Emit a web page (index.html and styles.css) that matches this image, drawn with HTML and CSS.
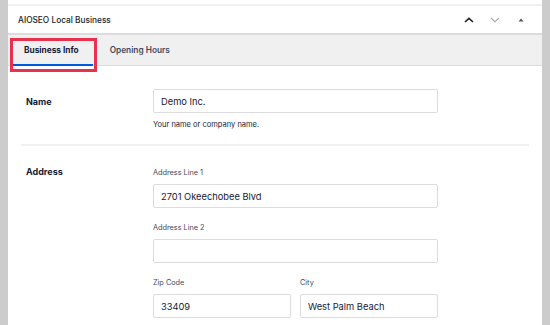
FILE: index.html
```html
<!DOCTYPE html>
<html lang="en">

<head>
    <meta charset="UTF-8">
    <meta name="viewport" content="width=device-width, initial-scale=1.0">
    <title>AIOSEO Local Business</title>
    <link rel="stylesheet" href="styles.css">
</head>

<body>
    <div class="panel">
        <div class="panel-header">
            <h2>AIOSEO Local Business</h2>
            <div class="panel-actions">
                <button class="action up" aria-label="Move up">
                    <svg width="10" height="6" viewBox="0 0 10 6"><path d="M1 5 L5 1.3 L9 5" fill="none" stroke="#1d2327" stroke-width="1.6"/></svg>
                </button>
                <button class="action down" aria-label="Move down">
                    <svg width="10" height="6" viewBox="0 0 10 6"><path d="M1 1 L5 4.7 L9 1" fill="none" stroke="#a7aaad" stroke-width="1.1"/></svg>
                </button>
                <button class="action toggle" aria-label="Toggle panel">
                    <svg width="6" height="4" viewBox="0 0 6 4"><path d="M0.5 3.5 L3 0.5 L5.5 3.5 Z" fill="#50575e"/></svg>
                </button>
            </div>
        </div>

        <div class="tabs">
            <div class="tab active">Business Info</div>
            <div class="tab">Opening Hours</div>
            <span class="highlight"></span>
        </div>

        <div class="content">
            <div class="row">
                <div class="row-label">Name</div>
                <div class="row-field">
                    <input class="field" type="text" value="Demo Inc.">
                    <p class="help">Your name or company name.</p>
                </div>
            </div>

            <div class="row">
                <div class="row-label">Address</div>
                <div class="row-field">
                    <div class="group">
                        <label class="small-label">Address Line 1</label>
                        <input class="field" type="text" value="2701 Okeechobee Blvd">
                    </div>
                    <div class="group">
                        <label class="small-label">Address Line 2</label>
                        <input class="field" type="text" value="">
                    </div>
                    <div class="group split">
                        <div>
                            <label class="small-label">Zip Code</label>
                            <input class="field" type="text" value="33409">
                        </div>
                        <div>
                            <label class="small-label">City</label>
                            <input class="field" type="text" value="West Palm Beach">
                        </div>
                    </div>
                </div>
            </div>
        </div>
    </div>
</body>

</html>
```

FILE: styles.css
```css
body {
    font-family: 'Inter', 'Liberation Sans', sans-serif;
    margin: 0;
    padding: 0 8px;
    height: 325px;
    overflow: hidden;
    background-color: #cccccc;
    color: #141b38;
}

.panel {
    background-color: #fff;
    height: 100%;
    padding-top: 4px;
}

.panel-header {
    border-top: 2px solid #f0f0f1;
    border-bottom: 2px solid #dcdcde;
    height: 27px;
    padding: 0 8px 0 10px;
    display: flex;
    justify-content: space-between;
    align-items: center;
}

.panel-header h2 {
    margin: 0;
    font-size: 8.3px;
    font-weight: 500;
    color: #1d2327;
}

.panel-actions {
    display: flex;
    align-items: center;
}

.action {
    background: none;
    border: none;
    padding: 0;
    width: 26px;
    height: 20px;
    display: flex;
    justify-content: center;
    align-items: center;
}

.action svg {
    display: block;
}

.tabs {
    position: relative;
    background-color: #f0f0f1;
    border-bottom: 1px solid #dcdcde;
    height: 30px;
    padding-left: 2px;
    display: flex;
    gap: 2px;
}

.tab {
    padding: 0 14px;
    font-size: 8.3px;
    font-weight: 600;
    color: #434960;
    display: flex;
    align-items: center;
    border-bottom: 2px solid transparent;
    margin-bottom: -1px;
}

.tab + .tab {
    padding-left: 15px;
}

.tab.active {
    color: #141b38;
    font-weight: 700;
    border-bottom-color: #005ae0;
}

/* red annotation box */
.highlight {
    position: absolute;
    left: 2px;
    top: 3px;
    width: 81px;
    height: 28px;
    border: 3px solid #e9304c;
}

.content {
    padding: 0 13px;
}

.row {
    display: grid;
    grid-template-columns: 132px 285px;
    align-items: baseline;
    padding: 23px 0 13px;
    border-bottom: 2px solid #f0f0f1;
}

.row + .row {
    padding-top: 20px;
    border-bottom: none;
}

.row-label {
    padding-left: 5px;
    font-size: 9px;
    font-weight: 700;
}

.field {
    display: block;
    box-sizing: border-box;
    width: 100%;
    height: 24px;
    margin: 0;
    padding: 0 7px;
    border: 1px solid #dcdcde;
    border-radius: 2px;
    font-family: inherit;
    font-size: 9.3px;
    color: #141b38;
    background: #fff;
}

.help {
    margin: 6px 0 0;
    font-size: 7.5px;
    line-height: 12px;
}

.group + .group {
    margin-top: 14px;
}

.small-label {
    display: block;
    font-size: 7.3px;
    line-height: 12px;
    margin-bottom: 5px;
    color: #434960;
}

.split {
    display: grid;
    grid-template-columns: 1fr 1fr;
    gap: 9px;
}
```
